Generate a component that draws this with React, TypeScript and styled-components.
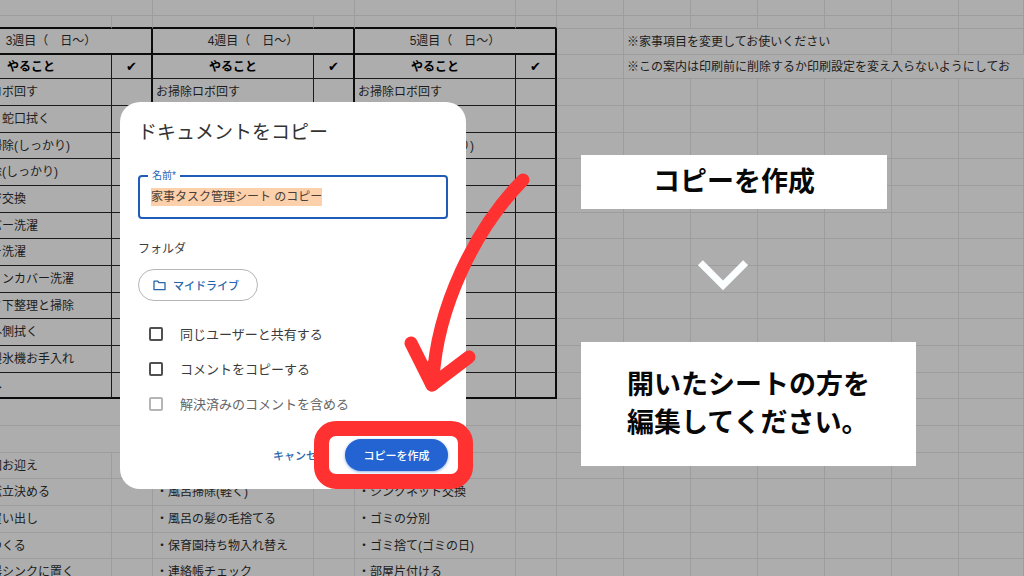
import React, { useEffect, useRef } from "react";
import styled, { createGlobalStyle, css } from "styled-components";

const GlobalStyle = createGlobalStyle`
  *, *::before, *::after { box-sizing: border-box; }
  body {
    margin: 0;
    background: #adadad;
    color: #1c1c1c;
    font-family: "Liberation Sans", "Noto Sans CJK JP", sans-serif;
  }
  button, input { font-family: inherit; }
`;

type Line = "none" | "grid" | "thin" | "thick";

const lines: Record<Line, string> = {
  none: "0",
  grid: "1px solid #9d9d9d",
  thin: "1px solid #1a1a1a",
  thick: "2px solid #0c0c0c",
};

const Page = styled.main`
  position: relative;
  height: 100vh;
  overflow: hidden;
`;

const Sheet = styled.table`
  width: calc(100% + 49px);
  margin-left: -49px;
  table-layout: fixed;
  border-collapse: separate;
  border-spacing: 0;
  font-size: 12px;
  line-height: 16px;
`;

const Col = styled.col<{ $width?: number }>`
  width: ${(p) => (p.$width ? `${p.$width}px` : "auto")};
`;

const Row = styled.tr<{ $height: number }>`
  height: ${(p) => p.$height}px;
`;

const cellStyle = css<{ $right: Line; $bottom: Line }>`
  padding: 0 3px;
  border-right: ${(p) => lines[p.$right]};
  border-bottom: ${(p) => lines[p.$bottom]};
  vertical-align: middle;
  white-space: nowrap;
`;

const Cell = styled.td<{ $right: Line; $bottom: Line }>`
  ${cellStyle}
`;

const HeadCell = styled.th<{ $right: Line; $bottom: Line; $bold?: boolean }>`
  ${cellStyle}
  text-align: center;
  font-weight: ${(p) => (p.$bold ? 700 : 400)};
  color: ${(p) => (p.$bold ? "#000" : "#1c1c1c")};
`;

const Check = styled.span`
  font-family: "DejaVu Sans", sans-serif;
  font-size: 13px;
`;

const Overlay = styled.div`
  position: absolute;
  inset: 0;
  display: flex;
  align-items: flex-start;
  gap: 115px;
  padding: 102px 0 0 120px;
`;

const Dialog = styled.form`
  position: relative;
  flex: none;
  width: 346px;
  padding: 17px 18px 18px;
  border-radius: 20px;
  background: #fff;
  color: #3c3c3c;
`;

const Title = styled.h1`
  margin: 0;
  font-size: 19px;
  line-height: 28px;
  font-weight: 400;
  color: #333;
`;

const NameField = styled.fieldset`
  height: 49px;
  margin: 23px 0 0;
  padding: 6px 8px 0;
  border: 2px solid #1f5cb8;
  border-radius: 4px;
`;

const NameLegend = styled.legend`
  padding: 0 4px;
  font-size: 10px;
  line-height: 12px;
  color: #2463b4;
`;

const NameInput = styled.input`
  display: block;
  width: 100%;
  height: 18px;
  padding: 0 3px;
  border: 0;
  outline: 0;
  background: transparent;
  color: #4a3f38;
  font-size: 12px;
  line-height: 18px;
  caret-color: transparent;
  &::selection {
    background: #fbd0ab;
    color: #4a3f38;
  }
`;

const FolderLabel = styled.h2`
  margin: 20px 0 10px;
  font-size: 12px;
  line-height: 20px;
  font-weight: 400;
`;

const Chip = styled.button`
  display: flex;
  align-items: center;
  gap: 7px;
  height: 32px;
  padding: 0 18px 0 14px;
  border: 1px solid #b4b6b8;
  border-radius: 16px;
  background: #fff;
  color: #2765ac;
  font-size: 11px;
  font-weight: 500;
`;

const Options = styled.div`
  margin-top: 15px;
  padding-left: 11px;
`;

const Option = styled.label<{ $muted?: boolean }>`
  display: flex;
  align-items: center;
  gap: 17px;
  height: 35px;
  font-size: 13px;
  color: ${(p) => (p.$muted ? "#666" : "#3c3c3c")};
`;

const Box = styled.input`
  appearance: none;
  width: 14px;
  height: 14px;
  margin: 0;
  border: 2px solid #505050;
  border-radius: 2px;
  background: #fff;
  &:disabled { border-color: #b5b5b5; }
`;

const Actions = styled.div`
  display: flex;
  justify-content: flex-end;
  align-items: center;
  gap: 17px;
  margin-top: 18px;
`;

const Cancel = styled.button`
  padding: 0;
  border: 0;
  background: none;
  color: #2765ac;
  font-size: 11px;
  font-weight: 500;
`;

const Highlight = styled.div`
  position: relative;
  &::after {
    content: "";
    position: absolute;
    inset: -18px -25px -18px -31px;
    border: 15px solid #ff3131;
    border-radius: 22px;
    pointer-events: none;
  }
`;

const Submit = styled.button`
  display: block;
  width: 103px;
  height: 32px;
  padding: 0;
  border: 0;
  border-radius: 16px;
  background: #2464d2;
  box-shadow: 0 1px 3px #2464d288;
  color: #fff;
  font-size: 11px;
  font-weight: 500;
`;

const Arrow = styled.svg`
  position: absolute;
  left: 280px;
  top: 66px;
  width: 140px;
  height: 232px;
  pointer-events: none;
`;

const Steps = styled.div`
  display: flex;
  flex-direction: column;
  align-items: flex-start;
  gap: 51px;
  padding-top: 53px;
`;

const Step = styled.p<{ $roomy?: boolean }>`
  margin: 0;
  padding: ${(p) => (p.$roomy ? "24px 46px" : "8px 72px")};
  background: #fff;
  color: #080808;
  font-size: 27px;
  line-height: 38px;
  font-weight: 700;
  white-space: nowrap;
`;

const Chevron = styled.svg`
  width: 50px;
  height: 31px;
  margin-left: 117px;
`;

const chores: [string, string, string][] = [
  ["お掃除ロボ回す", "お掃除ロボ回す", "お掃除ロボ回す"],
  ["洗面台　蛇口拭く", "", ""],
  ["・風呂掃除(しっかり)", "", "・風呂掃除(しっかり)"],
  ["・床掃除(しっかり)", "", "・床掃除(しっかり)"],
  ["スポンジ交換", "", ""],
  ["・枕カバー洗濯", "", ""],
  ["・カバー洗濯", "", ""],
  ["クッションカバー洗濯", "", ""],
  ["・ベッド下整理と掃除", "", ""],
  ["冷蔵庫外側拭く", "", ""],
  ["冷蔵庫製氷機お手入れ", "", ""],
  ["・玄関へ", "", ""],
];

const daily: [string, string, string][] = [
  ["", "", ""],
  ["", "", ""],
  ["・保育園お迎え", "", ""],
  ["・夕食献立決める", "・風呂掃除(軽く)", "・シンクネット交換"],
  ["・食材買い出し", "・風呂の髪の毛捨てる", "・ゴミの分別"],
  ["・夕食つくる", "・保育園持ち物入れ替え", "・ゴミ捨て(ゴミの日)"],
  ["・朝食器シンクに置く", "・連絡帳チェック", "・部屋片付ける"],
];

const rowHeight = (index: number) => (index % 3 === 2 ? 26 : 27);

const Blank = ({ count }: { count: number }) => (
  <>
    {Array.from({ length: count }, (_, i) => (
      <Cell key={i} $right="grid" $bottom="grid" />
    ))}
  </>
);

const SheetView = () => (
  <Sheet>
    <colgroup>
      {[161, 41, 161, 41, 161, 41, 67, 67, 67, 67, 67, 67].map((w, i) => (
        <Col key={i} $width={w} />
      ))}
      <Col />
    </colgroup>
    <thead>
      <Row $height={16}>
        <Cell colSpan={2} $right="grid" $bottom="grid" />
        <Cell colSpan={2} $right="grid" $bottom="grid" />
        <Blank count={9} />
      </Row>
      <Row $height={13}>
        {[0, 1, 2, 3, 4, 5].map((i) => (
          <Cell key={i} $right="grid" $bottom="thick" />
        ))}
        <Blank count={7} />
      </Row>
      <Row $height={26}>
        {[3, 4, 5].map((week) => (
          <HeadCell key={week} colSpan={2} $right="thick" $bottom="thick">
            {week}週目（　日〜）
          </HeadCell>
        ))}
        <Cell $right="grid" $bottom="grid" />
        <Cell colSpan={4} $right="grid" $bottom="grid">
          ※家事項目を変更してお使いください
        </Cell>
        <Blank count={2} />
      </Row>
      <Row $height={24}>
        {[3, 4, 5].map((week) => (
          <React.Fragment key={week}>
            <HeadCell $bold $right="thin" $bottom="thin">やること</HeadCell>
            <HeadCell $bold $right="thick" $bottom="thin"><Check>✔</Check></HeadCell>
          </React.Fragment>
        ))}
        <Cell $right="grid" $bottom="grid" />
        <Cell colSpan={6} $right="none" $bottom="grid">
          ※この案内は印刷前に削除するか印刷設定を変え入らないようにしてお
        </Cell>
      </Row>
    </thead>
    <tbody>
      {chores.map((row, r) => {
        const bottom: Line = r === chores.length - 1 ? "thick" : "thin";
        return (
          <Row key={r} $height={rowHeight(r)}>
            {row.map((text, c) => (
              <React.Fragment key={c}>
                <Cell $right="thin" $bottom={bottom}>{text}</Cell>
                <Cell $right="thick" $bottom={bottom} />
              </React.Fragment>
            ))}
            <Blank count={7} />
          </Row>
        );
      })}
      {daily.map((row, r) => (
        <Row key={r} $height={rowHeight(r)}>
          {row.map((text, c) =>
            c === 0 && !text ? (
              <Cell key={c} colSpan={2} $right="grid" $bottom="grid" />
            ) : (
              <React.Fragment key={c}>
                <Cell $right="grid" $bottom="grid">{text}</Cell>
                <Cell $right="grid" $bottom="grid" />
              </React.Fragment>
            )
          )}
          <Blank count={7} />
        </Row>
      ))}
    </tbody>
  </Sheet>
);

const CopyDialog = () => {
  const nameRef = useRef<HTMLInputElement>(null);
  useEffect(() => {
    nameRef.current?.focus();
    nameRef.current?.select();
  }, []);

  return (
    <Dialog role="dialog" aria-labelledby="copy-title" onSubmit={(e) => e.preventDefault()}>
      <Title id="copy-title">ドキュメントをコピー</Title>
      <NameField>
        <NameLegend>
          <label htmlFor="copy-name">名前*</label>
        </NameLegend>
        <NameInput id="copy-name" ref={nameRef} defaultValue="家事タスク管理シート のコピー" />
      </NameField>
      <FolderLabel>フォルダ</FolderLabel>
      <Chip type="button">
        <svg width="13" height="11" viewBox="0 0 13 11" fill="none" stroke="currentColor" strokeWidth="1.3" aria-hidden="true">
          <path d="M1 1.2h3.8l1.3 1.5H12v7H1z" strokeLinejoin="round" />
        </svg>
        マイドライブ
      </Chip>
      <Options>
        <Option><Box type="checkbox" />同じユーザーと共有する</Option>
        <Option><Box type="checkbox" />コメントをコピーする</Option>
        <Option $muted><Box type="checkbox" disabled />解決済みのコメントを含める</Option>
      </Options>
      <Actions>
        <Cancel type="button">キャンセル</Cancel>
        <Highlight>
          <Submit type="submit">コピーを作成</Submit>
        </Highlight>
      </Actions>
      <Arrow viewBox="400 168 140 232" fill="none" stroke="#ff3131" strokeWidth="13" strokeLinecap="round" strokeLinejoin="round" aria-hidden="true">
        <path d="M523 180C474 230 437 308 433 380" />
        <path d="M411 343L432 385L469 357" />
        <path d="M432 366V385" />
      </Arrow>
    </Dialog>
  );
};

export default function App() {
  return (
    <Page>
      <GlobalStyle />
      <SheetView />
      <Overlay>
        <CopyDialog />
        <Steps>
          <Step>コピーを作成</Step>
          <Chevron viewBox="0 0 50 31" fill="none" stroke="#fcffff" strokeWidth="7" aria-hidden="true">
            <path d="M2.4 2.6L25 25.4L47.6 2.6" />
          </Chevron>
          <Step $roomy>
            開いたシートの方を
            <br />
            編集してください。
          </Step>
        </Steps>
      </Overlay>
    </Page>
  );
}
